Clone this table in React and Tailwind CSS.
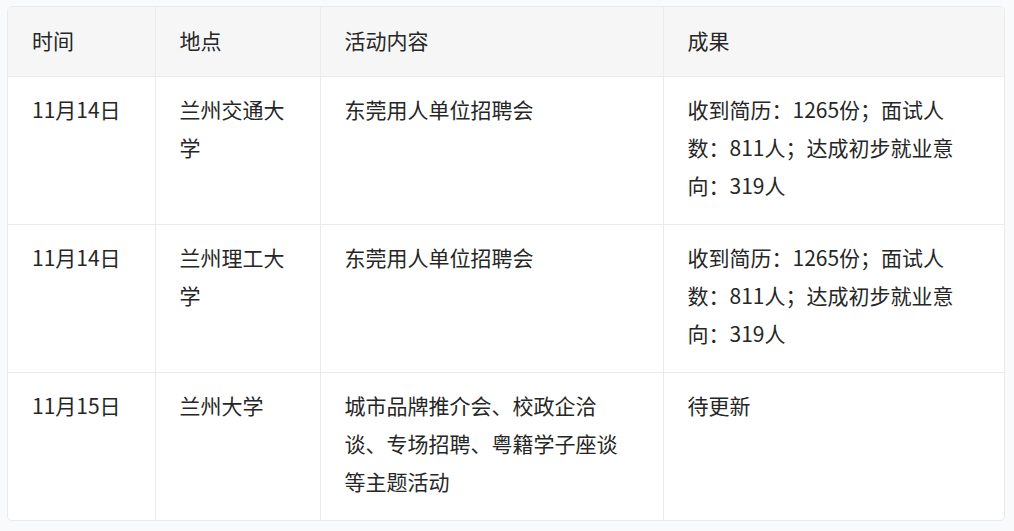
import React from "react";

const rows = [
  {
    time: "11月14日",
    place: "兰州交通大学",
    content: "东莞用人单位招聘会",
    result: "收到简历：1265份；面试人数：811人；达成初步就业意向：319人",
  },
  {
    time: "11月14日",
    place: "兰州理工大学",
    content: "东莞用人单位招聘会",
    result: "收到简历：1265份；面试人数：811人；达成初步就业意向：319人",
  },
  {
    time: "11月15日",
    place: "兰州大学",
    content: "城市品牌推介会、校政企洽谈、专场招聘、粤籍学子座谈等主题活动",
    result: "待更新",
  },
];

export default function App() {
  return (
    <div
      className="w-[1014px] h-[531px] bg-[#f9fafb] pt-[6px] pl-[7px]"
      style={{ fontFamily: '"Noto Sans CJK SC", "Noto Sans", sans-serif' }}
    >
      <div className="w-[998px] rounded-[5px] border border-[#ebebeb] overflow-hidden bg-white">
        <table className="w-full table-fixed border-collapse text-[21px] leading-[38px] text-[#262626]">
          <colgroup>
            <col className="w-[147px]" />
            <col className="w-[165px]" />
            <col className="w-[343px]" />
            <col className="w-[343px]" />
          </colgroup>
          <thead>
            <tr className="bg-[#f6f6f6]">
              <th className="pl-6 pr-6 pt-[14px] pb-[17px] text-left font-normal">时间</th>
              <th className="pl-6 pr-6 pt-[14px] pb-[17px] text-left font-normal border-l border-[#ebebeb]">地点</th>
              <th className="pl-6 pr-[40px] pt-[14px] pb-[17px] text-left font-normal border-l border-[#ebebeb]">活动内容</th>
              <th className="pl-6 pr-6 pt-[14px] pb-[17px] text-left font-normal border-l border-[#ebebeb]">成果</th>
            </tr>
          </thead>
          <tbody>
            {rows.map((r, i) => (
              <tr key={i} className="border-t border-[#ebebeb] align-top">
                <td className="pl-6 pr-6 pt-[13px] pb-[20px]">{r.time}</td>
                <td className="pl-6 pr-6 pt-[13px] pb-[20px] border-l border-[#ebebeb]">{r.place}</td>
                <td className="pl-6 pr-[40px] pt-[13px] pb-[20px] border-l border-[#ebebeb]">{r.content}</td>
                <td className="pl-6 pr-6 pt-[13px] pb-[20px] border-l border-[#ebebeb]">{r.result}</td>
              </tr>
            ))}
          </tbody>
        </table>
      </div>
    </div>
  );
}
